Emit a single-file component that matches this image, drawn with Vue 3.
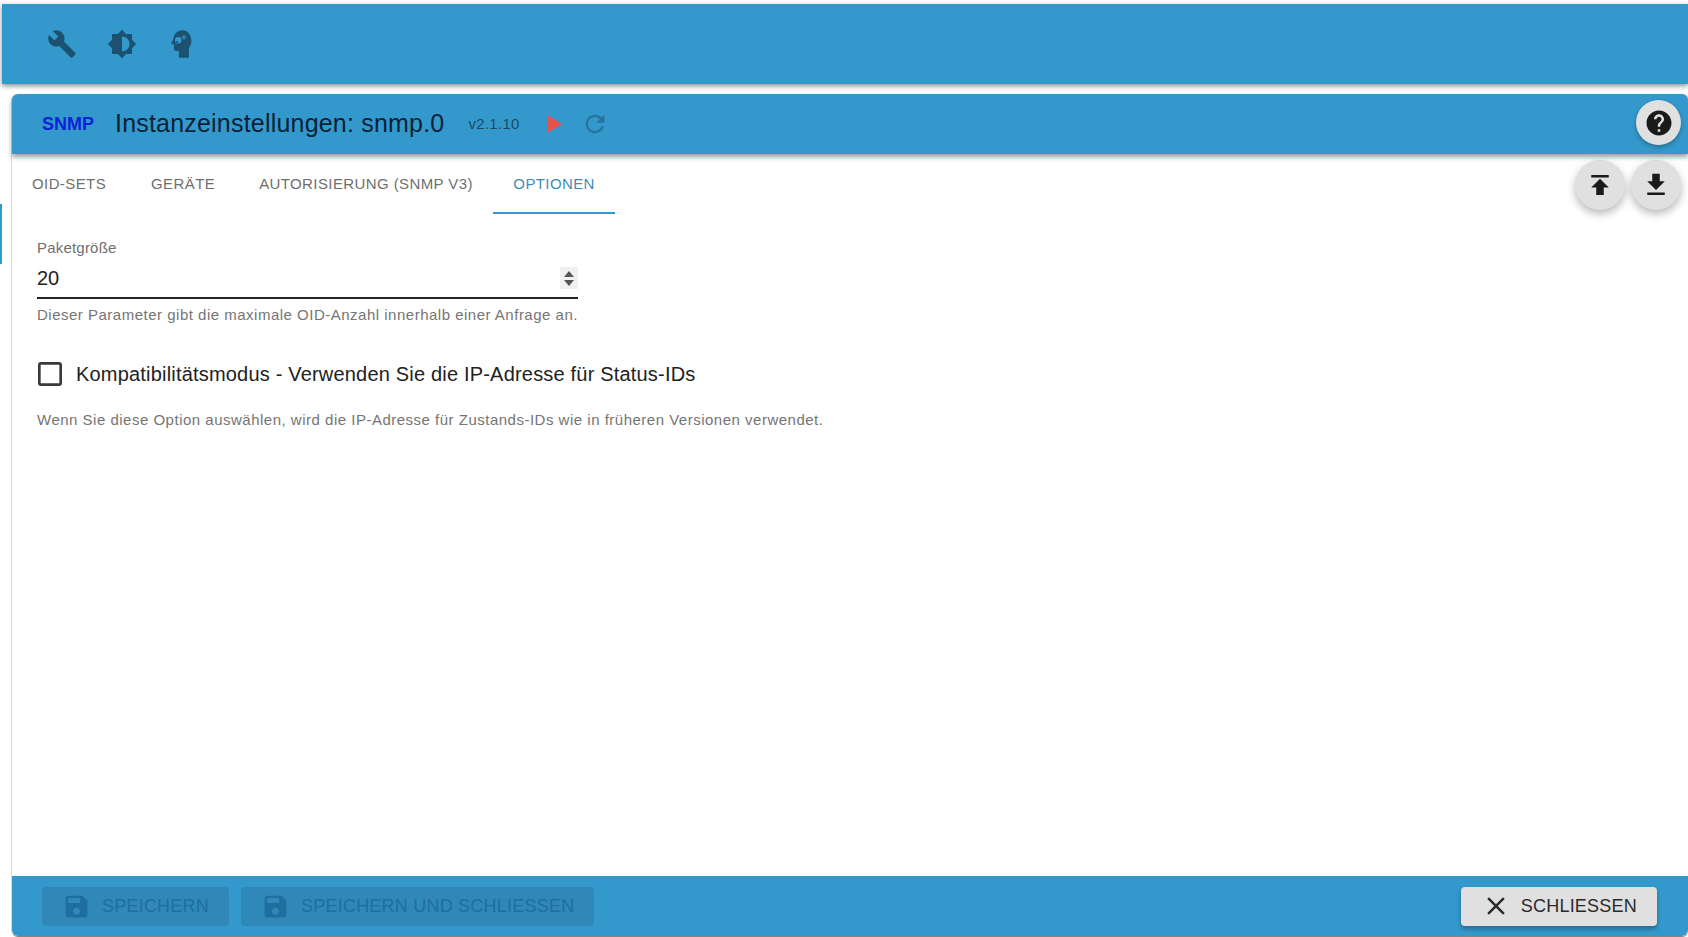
<template>
<div class="page">
  <div class="side-mark"></div>

  <header class="topbar">
    <button class="top-btn">
      <svg viewBox="0 0 24 24" class="top-icon"><path d="M22.7 19l-9.1-9.1c.9-2.3.4-5-1.5-6.9-2-2-5-2.4-7.4-1.3L9 6 6 9 1.6 4.7C.4 7.1.9 10.1 2.9 12.1c1.9 1.9 4.6 2.4 6.9 1.5l9.1 9.1c.4.4 1 .4 1.4 0l2.3-2.3c.5-.4.5-1.1.1-1.4z"/></svg>
    </button>
    <button class="top-btn">
      <svg viewBox="0 0 24 24" class="top-icon"><path fill-rule="evenodd" d="M20 15.31L23.31 12 20 8.69V4h-4.69L12 .69 8.69 4H4v4.69L.69 12 4 15.31V20h4.69L12 23.31 15.31 20H20v-4.69zM12 18V6c3.31 0 6 2.69 6 6s-2.69 6-6 6z"/></svg>
    </button>
    <button class="top-btn">
      <svg viewBox="1.5 0 24 24" class="top-icon"><path fill-rule="evenodd" d="M14 1C9.6 1 7 4 6.6 8L5 11.2c-.2.5.1.9.6.9H7v3.5c0 1.1.8 1.9 1.9 1.9H11V23h8v-8c1.3-1.5 2-3.2 2-5.3C21 4.8 18 1 14 1zM10.5 6.4a2.6 2.6 0 1 0 0 5.2 2.6 2.6 0 0 0 0-5.2zM9.3 9.5a1.2 1.2 0 1 1 0 2.4 1.2 1.2 0 0 1 0-2.4zM14.6 4.6v1.5h-1.5v.9h1.5v1.5h.9V7H17v-.9h-1.5V4.6z"/></svg>
    </button>
  </header>

  <main class="panel">
    <div class="panel-head">
      <span class="adapter">SNMP</span>
      <h1 class="title">Instanzeinstellungen: snmp.0</h1>
      <span class="version">v2.1.10</span>
      <svg viewBox="0 0 24 24" class="play"><path d="M6 3.5v17L20 12z"/></svg>
      <svg viewBox="0 0 24 24" class="reload"><path d="M17.65 6.35C16.2 4.9 14.21 4 12 4c-4.42 0-7.99 3.58-7.99 8s3.57 8 7.99 8c3.73 0 6.84-2.55 7.73-6h-2.08c-.82 2.33-3.04 4-5.65 4-3.31 0-6-2.69-6-6s2.69-6 6-6c1.66 0 3.14.69 4.22 1.78L13 11h7V4l-2.35 2.35z"/></svg>
      <button class="help">
        <svg viewBox="0 0 24 24"><path d="M12 2C6.48 2 2 6.48 2 12s4.48 10 10 10 10-4.48 10-10S17.52 2 12 2zm1 17h-2v-2h2v2zm2.07-7.75l-.9.92C13.45 12.9 13 13.5 13 15h-2v-.5c0-1.1.45-2.1 1.17-2.83l1.24-1.26c.37-.36.59-.86.59-1.41 0-1.1-.9-2-2-2s-2 .9-2 2H8c0-2.21 1.79-4 4-4s4 1.79 4 4c0 .88-.36 1.68-.93 2.25z"/></svg>
      </button>
    </div>

    <nav class="tabs">
      <button
        v-for="tab in tabs"
        :key="tab"
        class="tab"
        :class="{ active: activeTab === tab }"
        @click="activeTab = tab"
      >{{ tab }}</button>
      <div class="fabs">
        <button class="fab">
          <svg viewBox="0 0 24 24"><path d="M5 4v2h14V4H5zm0 10h4v6h6v-6h4l-7-7-7 7z"/></svg>
        </button>
        <button class="fab">
          <svg viewBox="0 0 24 24"><path d="M19 9h-4V3H9v6H5l7 7 7-7zM5 18v2h14v-2H5z"/></svg>
        </button>
      </div>
    </nav>

    <section class="content">
      <div class="field">
        <label class="field-label">Paketgröße</label>
        <div class="input-row">
          <span class="value">{{ packetSize }}</span>
          <span class="spinner">
            <svg viewBox="0 0 18 22"><path d="M9 4l5 6H4zM4 13h10l-5 6z"/></svg>
          </span>
        </div>
        <p class="hint">Dieser Parameter gibt die maximale OID-Anzahl innerhalb einer Anfrage an.</p>
      </div>

      <label class="check-row">
        <svg viewBox="0 0 24 24" class="check"><path d="M19 5v14H5V5h14m0-2H5c-1.1 0-2 .9-2 2v14c0 1.1.9 2 2 2h14c1.1 0 2-.9 2-2V5c0-1.1-.9-2-2-2z"/></svg>
        <span>Kompatibilitätsmodus - Verwenden Sie die IP-Adresse für Status-IDs</span>
      </label>
      <p class="hint second">Wenn Sie diese Option auswählen, wird die IP-Adresse für Zustands-IDs wie in früheren Versionen verwendet.</p>
    </section>

    <footer class="footer">
      <button class="btn disabled">
        <svg viewBox="0 0 24 24"><path d="M17 3H5c-1.11 0-2 .9-2 2v14c0 1.1.89 2 2 2h14c1.1 0 2-.9 2-2V7l-4-4zm-5 16c-1.66 0-3-1.34-3-3s1.34-3 3-3 3 1.34 3 3-1.34 3-3 3zm3-10H5V5h10v4z"/></svg>
        SPEICHERN
      </button>
      <button class="btn disabled">
        <svg viewBox="0 0 24 24"><path d="M17 3H5c-1.11 0-2 .9-2 2v14c0 1.1.89 2 2 2h14c1.1 0 2-.9 2-2V7l-4-4zm-5 16c-1.66 0-3-1.34-3-3s1.34-3 3-3 3 1.34 3 3-1.34 3-3 3zm3-10H5V5h10v4z"/></svg>
        SPEICHERN UND SCHLIESSEN
      </button>
      <button class="btn close">
        <svg viewBox="0 0 24 24"><path d="M19 6.41L17.59 5 12 10.59 6.41 5 5 6.41 10.59 12 5 17.59 6.41 19 12 13.41 17.59 19 19 17.59 13.41 12z"/></svg>
        SCHLIESSEN
      </button>
    </footer>
  </main>
</div>
</template>

<script setup>
import { ref } from 'vue'

const tabs = ['OID-SETS', 'GERÄTE', 'AUTORISIERUNG (SNMP V3)', 'OPTIONEN']
const activeTab = ref('OPTIONEN')
const packetSize = ref(20)
</script>

<style>
html, body {
  margin: 0;
  background: #fff;
  overflow: hidden;
}
</style>

<style scoped>
.page {
  position: relative;
  height: 937px;
  padding-top: 4px;
  box-sizing: border-box;
  display: flex;
  flex-direction: column;
  font-family: "Liberation Sans", Arial, sans-serif;
  background: #fff;
  overflow: hidden;
}

button {
  font-family: inherit;
  border: none;
}

.side-mark {
  position: absolute;
  left: 0;
  top: 204px;
  width: 2px;
  height: 60px;
  background: #3399cc;
}

.topbar {
  position: relative;
  z-index: 2;
  margin-left: 2px;
  height: 80px;
  flex: none;
  display: flex;
  align-items: center;
  padding-left: 36px;
  gap: 12px;
  background: #3399cc;
  box-shadow: 0 2px 5px rgba(0,0,0,.45);
}

.top-btn {
  width: 48px;
  height: 48px;
  padding: 0;
  display: flex;
  align-items: center;
  justify-content: center;
  background: none;
}

.top-icon {
  width: 30px;
  height: 30px;
  fill: #1c5270;
}

.panel {
  flex: 1;
  min-height: 0;
  margin: 10px 0 1px 12px;
  display: flex;
  flex-direction: column;
  background: #fff;
  border-radius: 6px;
  box-shadow: -1px 0 0 #d8d8d8, 1px 0 0 #d8d8d8, 0 1px 1px #777;
}

.panel-head {
  position: relative;
  z-index: 1;
  height: 60px;
  flex: none;
  display: flex;
  align-items: center;
  background: #3399cc;
  border-radius: 6px 6px 0 0;
  box-shadow: 0 3px 5px rgba(0,0,0,.4);
}

.adapter {
  margin-left: 30px;
  width: 73px;
  font-size: 18px;
  font-weight: 700;
  color: #0a22d8;
}

.title {
  margin: 0 0 2px;
  font-size: 25px;
  font-weight: 400;
  letter-spacing: .2px;
  color: #0b2236;
}

.version {
  margin: 0 0 1px 24px;
  font-size: 15px;
  letter-spacing: .3px;
  color: #1c4a66;
}

.play {
  margin-left: 22px;
  width: 24px;
  height: 24px;
  fill: #e8504c;
}

.reload {
  margin-left: 15px;
  width: 28px;
  height: 28px;
  fill: #27749f;
}

.help {
  position: absolute;
  right: 7px;
  top: 6px;
  width: 45px;
  height: 45px;
  padding: 7.5px;
  border-radius: 50%;
  background: #e0e0e0;
  box-shadow: 0 2px 5px rgba(0,0,0,.3);
}

.help svg,
.fab svg {
  display: block;
  width: 100%;
  height: 100%;
  fill: #1a1a1a;
}

.tabs {
  position: relative;
  height: 60px;
  flex: none;
  display: flex;
}

.tab {
  padding: 0 20px;
  height: 60px;
  background: none;
  font-size: 15px;
  letter-spacing: .4px;
  color: #6f6f6f;
  border-bottom: 2px solid transparent;
}

.tab:nth-child(1) {
  padding-right: 25px;
}

.tab:nth-child(2) {
  padding-right: 24px;
}

.tab.active {
  padding: 0 20.5px;
  color: #3f8cba;
  border-bottom-color: #3399cc;
}

.fabs {
  position: absolute;
  right: 7px;
  top: 6px;
  display: flex;
  gap: 6px;
}

.fab {
  width: 50px;
  height: 50px;
  padding: 10px;
  border-radius: 50%;
  background: #e0e0e0;
  box-shadow: 0 4px 8px rgba(0,0,0,.28);
}

.content {
  flex: 1;
  padding: 24px 0 0 25px;
}

.field {
  width: 541px;
}

.field-label {
  display: block;
  font-size: 15px;
  letter-spacing: .2px;
  color: #6f6f6f;
  line-height: 20px;
}

.input-row {
  height: 41px;
  box-sizing: border-box;
  display: flex;
  align-items: center;
  justify-content: space-between;
  border-bottom: 2px solid #222;
}

.value {
  margin-top: 2px;
  font-size: 20px;
  color: #222;
}

.spinner {
  width: 18px;
  height: 22px;
  background: #f0f0f0;
}

.spinner svg {
  display: block;
  fill: #555;
}

.hint {
  margin: 7px 0 0;
  font-size: 15px;
  line-height: 18px;
  letter-spacing: .5px;
  white-space: nowrap;
  color: #757575;
}

.check-row {
  margin-top: 34px;
  display: flex;
  align-items: center;
  gap: 10px;
  font-size: 20px;
  letter-spacing: .19px;
  color: #222;
}

.check {
  width: 32px;
  height: 32px;
  margin-left: -3px;
  fill: #3a3a3a;
}

.hint.second {
  margin-top: 21px;
}

.footer {
  height: 60px;
  flex: none;
  display: flex;
  align-items: center;
  padding: 0 31px 0 30px;
  gap: 12px;
  background: #3399cc;
  border-radius: 0 0 6px 6px;
}

.btn {
  height: 39px;
  display: flex;
  align-items: center;
  gap: 11px;
  padding: 0 20px;
  font-size: 18px;
  letter-spacing: .22px;
  border-radius: 4px;
}

.btn svg {
  width: 29px;
  height: 29px;
  flex: none;
}

.btn.disabled {
  background: #2f88b8;
  color: #1f6f9e;
}

.btn.disabled svg {
  fill: #1f6f9e;
}

.btn.close {
  margin-left: auto;
  gap: 10px;
  padding: 0 20px;
  background: #e0e0e0;
  color: #2a2a2a;
  box-shadow: 0 3px 5px rgba(0,0,0,.3);
}

.btn.close svg {
  width: 30px;
  height: 30px;
  fill: #2a2a2a;
}
</style>
